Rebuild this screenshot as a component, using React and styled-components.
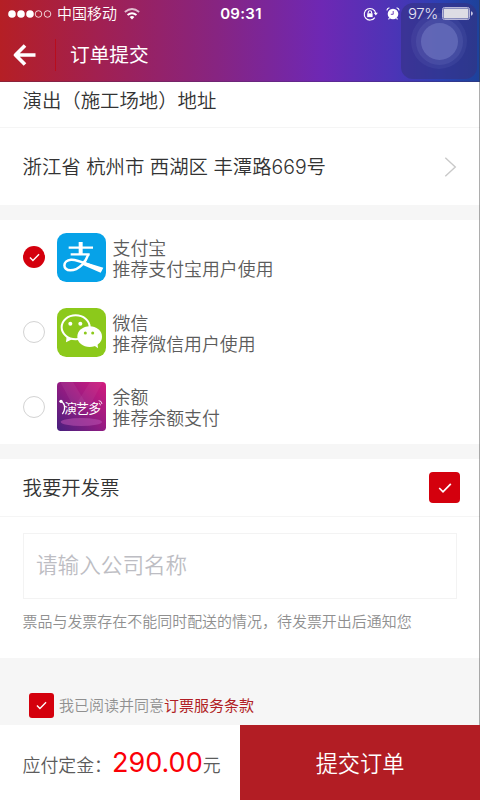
import React, { useState } from 'react';
import styled, { createGlobalStyle } from 'styled-components';

const GlobalStyle = createGlobalStyle`
  * { box-sizing: border-box; }
  body {
    margin: 0;
    background: #f6f6f6;
    font-family: Inter, "Noto Sans CJK SC", sans-serif;
    font-weight: 350;
    color: #333;
  }
  button, input { font: inherit; border: 0; padding: 0; background: none; }
`;

const Screen = styled.div`
  position: relative;
  display: flex;
  flex-direction: column;
  width: 480px;
  height: 800px;
  overflow: hidden;
  background: #f6f6f6;
`;

const ScreenEdge = styled.div`
  position: absolute;
  top: 0;
  right: 0;
  width: 1px;
  height: 725px;
  background: rgba(60, 60, 60, 0.42);
`;

const Header = styled.header`
  position: relative;
  flex: none;
  height: 82px;
  color: #fff;
  background: linear-gradient(90deg, #b51f25 0%, #a12052 21%, #872481 45%, #6e28b4 67%, #4c34b6 82%, #2b40b2 92%, #1d429a 100%);
  border-bottom: 1px solid rgba(70, 40, 90, 0.35);
`;

const StatusBar = styled.div`
  display: grid;
  grid-template-columns: 1fr auto 1fr;
  align-items: center;
  height: 27px;
  padding: 0 7px 0 8px;
  font-size: 15px;
`;

const StatusGroup = styled.div`
  display: flex;
  align-items: center;
  justify-content: ${({ $end }) => ($end ? 'flex-end' : 'flex-start')};
  height: 27px;
  line-height: 27px;
`;

const Signal = styled.svg`
  width: 44px;
  height: 10px;
  margin-right: 5px;
`;

const Carrier = styled.span`
  font-size: 15px;
  margin-right: 7px;
`;

const Clock = styled.time`
  font-size: 15px;
  font-weight: 600;
  letter-spacing: 0.3px;
  margin-left: 1px;
`;

const StatusIcon = styled.svg`
  width: ${({ $w }) => $w}px;
  height: ${({ $h }) => $h}px;
  margin-right: ${({ $gap }) => $gap || 0}px;
  flex: none;
`;

const Percent = styled.span`
  font-size: 15px;
  letter-spacing: -0.4px;
  color: #e4e2f2;
  margin-right: 4px;
`;

const AssistiveTouch = styled.div`
  position: absolute;
  left: 401px;
  top: 3px;
  width: 76px;
  height: 76px;
  border-radius: 12px;
  background: rgba(54, 50, 130, 0.62);
`;

const TouchRing = styled.div`
  position: absolute;
  left: ${({ $inset }) => $inset}px;
  top: ${({ $inset }) => $inset}px;
  width: ${({ $inset }) => 76 - 2 * $inset}px;
  height: ${({ $inset }) => 76 - 2 * $inset}px;
  border-radius: 50%;
  background: rgba(140, 150, 215, ${({ $alpha }) => $alpha});
`;

const StatusLayer = styled.div`
  position: relative;
  z-index: 1;
`;

const NavBar = styled.div`
  display: flex;
  align-items: center;
  height: 55px;
`;

const BackButton = styled.button`
  display: flex;
  align-items: center;
  width: 56px;
  height: 32px;
  padding-left: 13px;
  border-right: 1px solid #b90d1c;
  color: #fff;
`;

const Title = styled.h1`
  margin: 0 0 0 14px;
  font-size: 19.7px;
  line-height: 28px;
  font-weight: 400;
`;

const Section = styled.section`
  flex: none;
  height: ${({ $height }) => $height}px;
  margin-bottom: ${({ $gap }) => $gap}px;
  background: #fff;
`;

const Row = styled.div`
  display: flex;
  align-items: center;
  justify-content: space-between;
  height: ${({ $height }) => $height}px;
  padding: 0 ${({ $right }) => $right || 23}px ${({ $lift }) => $lift || 0}px 22.5px;
  border-bottom: ${({ $divided }) => ($divided ? '1px solid #f5f5f5' : '0')};
  font-size: 19.4px;
  line-height: 28px;
  white-space: pre;
`;

const PaymentList = styled(Section)`
  display: flex;
  flex-direction: column;
`;

const PaymentOption = styled.label`
  display: flex;
  align-items: center;
  height: 75px;
  padding-left: 23px;
  cursor: pointer;
`;

const RadioMark = styled.span`
  display: flex;
  align-items: center;
  justify-content: center;
  width: 22px;
  height: 22px;
  margin-right: 12px;
  border-radius: 50%;
  border: ${({ $on }) => ($on ? '0' : '1px solid #d3d3d3')};
  background: ${({ $on }) => ($on ? '#d4000d' : '#fff')};
`;

const HiddenRadio = styled.input`
  position: absolute;
  opacity: 0;
  pointer-events: none;
`;

const Logo = styled.svg`
  display: block;
  width: 49px;
  height: 49px;
`;

const PaymentText = styled.span`
  display: flex;
  flex-direction: column;
  margin-left: 6.5px;
  padding-top: 3px;
  font-size: 17.9px;
  line-height: 21px;
  color: #5c5c5c;
`;

const CheckBox = styled.button`
  display: flex;
  align-items: center;
  justify-content: center;
  width: ${({ $size }) => $size}px;
  height: ${({ $size }) => $size}px;
  border-radius: ${({ $size }) => ($size > 28 ? 4 : 3)}px;
  background: ${({ $on }) => ($on ? '#d4000d' : '#fff')};
  cursor: pointer;
`;

const CompanyInput = styled.input`
  display: block;
  width: 434px;
  height: 66px;
  margin: 16px 0 0 23px;
  padding: 0 12px 2px;
  border: 1px solid #f3f3f3;
  font-size: 21.6px;
  color: #333;
  outline: none;
  &::placeholder { color: #bdbdc3; opacity: 1; }
`;

const Note = styled.p`
  margin: 12px 0 0 22.5px;
  font-size: 14.97px;
  line-height: 22px;
  color: #909090;
  white-space: nowrap;
`;

const Agreement = styled.div`
  display: flex;
  align-items: center;
  flex: none;
  height: 67px;
  padding: 28px 0 0 29px;
  font-size: 15px;
  line-height: 22px;
  color: #909090;
`;

const AgreementText = styled.span`
  margin-left: 5px;
  padding-top: 1px;
`;

const Terms = styled.a`
  font-weight: 400;
  color: #b11e25;
`;

const Footer = styled.footer`
  display: flex;
  flex: none;
  height: 75px;
  background: #fff;
`;

const Total = styled.div`
  display: flex;
  align-items: baseline;
  width: 240px;
  padding: 18px 0 0 22.5px;
  font-size: 17.9px;
  line-height: 40px;
  color: #5c5c5c;
  white-space: nowrap;
`;

const Amount = styled.strong`
  font-size: 27px;
  font-weight: 400;
  color: #fb0007;
`;

const Submit = styled.button`
  flex: 1;
  padding-bottom: 2px;
  font-size: 22.2px;
  color: #fff;
  background: #b21d24;
  cursor: pointer;
`;

const Check = ({ size }) => (
  <svg width={size} height={size} viewBox="0 0 14 14" fill="none" stroke="#fff" strokeWidth="1.7">
    <path d="M1.2 7 5 10.8 12.8 2.8" />
  </svg>
);

const AlipayLogo = () => (
  <Logo viewBox="0 0 147 147">
    <rect width="147" height="147" rx="28" fill="#06a2e8" />
    <g fill="none" stroke="#fff">
      <path d="M35 44H108M41 64H98" strokeWidth="7" />
      <path d="M71 27V64" strokeWidth="12" />
      <path d="M94 64C87 86 66 112 40 112C16 112 16 82 42 80C65 78 96 98 134 109" strokeWidth="7.5" />
    </g>
    <path d="M80 86 139 104 131 119 76 95Z" fill="#fff" />
  </Logo>
);

const WechatLogo = () => (
  <Logo viewBox="0 0 147 147">
    <rect width="147" height="147" rx="28" fill="#8cc91b" />
    <path d="M29 85 27 103 47 93Z" fill="#fff" />
    <ellipse cx="56" cy="58" rx="42" ry="36" fill="#8cc91b" stroke="#fff" strokeWidth="6" />
    <circle cx="40" cy="47" r="6" fill="#fff" />
    <circle cx="70" cy="47" r="6" fill="#fff" />
    <path d="M106 109 123 121 121 102Z" fill="#fff" />
    <ellipse cx="98" cy="86" rx="37" ry="31" fill="#fff" />
    <circle cx="85" cy="75" r="4.5" fill="#8cc91b" />
    <circle cx="107" cy="75" r="4.5" fill="#8cc91b" />
  </Logo>
);

const BalanceLogo = () => (
  <Logo viewBox="0 0 147 147">
    <defs>
      <linearGradient id="stage" x1="1" y1="0" x2="0" y2="1">
        <stop offset="0" stopColor="#d31b7d" />
        <stop offset="0.45" stopColor="#9b1b82" />
        <stop offset="1" stopColor="#46207e" />
      </linearGradient>
    </defs>
    <rect width="147" height="147" rx="11" fill="url(#stage)" />
    <path d="M10 0 48 0 94 76 50 76Z" fill="#fff" opacity="0.06" />
    <path d="M137 0 99 0 52 76 96 76Z" fill="#fff" opacity="0.05" />
    <ellipse cx="73" cy="120" rx="62" ry="12" fill="#b44fae" opacity="0.6" />
    <g fill="none" stroke="#fff" strokeWidth="4">
      <path d="M10 57Q20 62 22 70Q25 84 16 96" />
      <path d="M125 56Q134 56 135 66M126 63Q130 64 130 70" strokeWidth="2.5" />
    </g>
    <circle cx="12" cy="58" r="5" fill="#fff" />
    <text x="22" y="92" fill="#fff" fontFamily="Noto Sans CJK SC, sans-serif" fontSize="38" fontWeight="400" textLength="110">演艺多</text>
  </Logo>
);

const METHODS = [
  { id: 'alipay', name: '支付宝', hint: '推荐支付宝用户使用', Mark: AlipayLogo },
  { id: 'wechat', name: '微信', hint: '推荐微信用户使用', Mark: WechatLogo },
  { id: 'balance', name: '余额', hint: '推荐余额支付', Mark: BalanceLogo },
];

const StatusRow = () => (
  <StatusBar>
    <StatusGroup>
      <Signal viewBox="0 0 44 10">
        {[4, 13, 22].map((x) => <circle key={x} cx={x} cy="5" r="3.8" fill="#fff" />)}
        {[30.5, 39.5].map((x) => <circle key={x} cx={x} cy="5" r="3.3" fill="none" stroke="#fff" strokeWidth="0.8" />)}
      </Signal>
      <Carrier>中国移动</Carrier>
      <StatusIcon $w={16} $h={12} viewBox="0 0 15 11" fill="none" stroke="#fff" strokeWidth="1.8">
        <path d="M.8 3.6Q7.5-1.8 14.2 3.6" opacity="0.7" />
        <path d="M3.3 6.4Q7.5 3 11.7 6.4" />
        <path d="M5.3 8.2Q7.5 6.6 9.7 8.2L7.5 10.6Z" fill="#fff" stroke="none" />
      </StatusIcon>
    </StatusGroup>
    <Clock>09:31</Clock>
    <StatusGroup $end>
      <StatusIcon $w={15} $h={14} $gap={8} viewBox="0 0 15 14" fill="none" stroke="#fff" strokeWidth="1.1">
        <path d="M12.7 6A5.8 5.8 0 1 0 11.8 10.6" />
        <path d="M10.7 5.8H14.9L12.8 8.5Z" fill="#fff" stroke="none" />
        <rect x="4.2" y="6.3" width="5.4" height="3.8" fill="#fff" stroke="none" />
        <path d="M5.2 6.5V5.2Q5.2 3.7 6.9 3.7T8.6 5.2V6.5" />
      </StatusIcon>
      <StatusIcon $w={14} $h={13} $gap={8} viewBox="0 0 14 13" fill="none">
        <circle cx="7" cy="7" r="5.3" fill="#fff" />
        <path d="M3.5 11 2.5 12.3M10.5 11 11.5 12.3" stroke="#fff" strokeWidth="1.2" />
        <path d="M.8 3.3Q1.2 1.2 3.4.8M10.6.8Q12.8 1.2 13.2 3.3" stroke="#fff" strokeWidth="1.1" />
        <path d="M7.2 4V7.3H4.8" stroke="#6231b6" strokeWidth="0.9" />
      </StatusIcon>
      <Percent>97%</Percent>
      <StatusIcon $w={31} $h={13} viewBox="0 0 31 13">
        <rect x="0.5" y="0.5" width="27" height="12" rx="2" fill="none" stroke="#b9b8da" />
        <rect x="1.5" y="1.5" width="25" height="10" rx="1" fill="#dedde4" />
        <path d="M29 4.3Q30.8 4.5 30.8 6.5T29 8.7Z" fill="#c9c8e6" />
      </StatusIcon>
    </StatusGroup>
  </StatusBar>
);

export default function App() {
  const [method, setMethod] = useState('alipay');
  const [invoice, setInvoice] = useState(true);
  const [agreed, setAgreed] = useState(true);
  const [company, setCompany] = useState('');

  return (
    <>
      <GlobalStyle />
      <Screen>
        <Header>
          <AssistiveTouch>
            <TouchRing $inset={10} $alpha={0.1} />
            <TouchRing $inset={14.5} $alpha={0.15} />
            <TouchRing $inset={19.5} $alpha={0.36} />
          </AssistiveTouch>
          <StatusLayer>
            <StatusRow />
            <NavBar>
              <BackButton aria-label="返回">
                <svg width="23" height="24" viewBox="0 0 23 24" fill="none" stroke="#fff" strokeWidth="3.6">
                  <path d="M2.5 12H22.5M12 2.4 2.5 12 12 21.6" strokeLinejoin="round" />
                </svg>
              </BackButton>
              <Title>订单提交</Title>
            </NavBar>
          </StatusLayer>
        </Header>

        <Section $height={123} $gap={15}>
          <Row $height={46} $lift={7} $divided>
            <span>演出（施工场地）地址</span>
          </Row>
          <Row $height={77}>
            <span>浙江省 杭州市 西湖区 丰潭路669号</span>
            <svg width="13" height="20" viewBox="0 0 13 20" fill="none" stroke="#c9c9c9" strokeWidth="1.4">
              <path d="M1.3.8 11.3 10 1.3 19.2" />
            </svg>
          </Row>
        </Section>

        <PaymentList $height={224} $gap={15}>
          {METHODS.map(({ id, name, hint, Mark }) => (
            <PaymentOption key={id}>
              <HiddenRadio type="radio" name="method" checked={method === id} onChange={() => setMethod(id)} />
              <RadioMark $on={method === id}>{method === id && <Check size={11} />}</RadioMark>
              <Mark />
              <PaymentText>
                <span>{name}</span>
                <span>{hint}</span>
              </PaymentText>
            </PaymentOption>
          ))}
        </PaymentList>

        <Section $height={199} $gap={0}>
          <Row $height={58} $right={20} $divided>
            <span>我要开发票</span>
            <CheckBox $size={31} $on={invoice} aria-label="我要开发票" onClick={() => setInvoice(!invoice)}>
              {invoice && <Check size={14} />}
            </CheckBox>
          </Row>
          <CompanyInput placeholder="请输入公司名称" value={company} onChange={(e) => setCompany(e.target.value)} />
          <Note>票品与发票存在不能同时配送的情况，待发票开出后通知您</Note>
        </Section>

        <Agreement>
          <CheckBox $size={25} $on={agreed} aria-label="同意条款" onClick={() => setAgreed(!agreed)}>
            {agreed && <Check size={11} />}
          </CheckBox>
          <AgreementText>我已阅读并同意<Terms>订票服务条款</Terms></AgreementText>
        </Agreement>

        <Footer>
          <Total>
            <span>应付定金：</span>
            <Amount>290.00</Amount>
            <span>元</span>
          </Total>
          <Submit>提交订单</Submit>
        </Footer>
        <ScreenEdge />
      </Screen>
    </>
  );
}
